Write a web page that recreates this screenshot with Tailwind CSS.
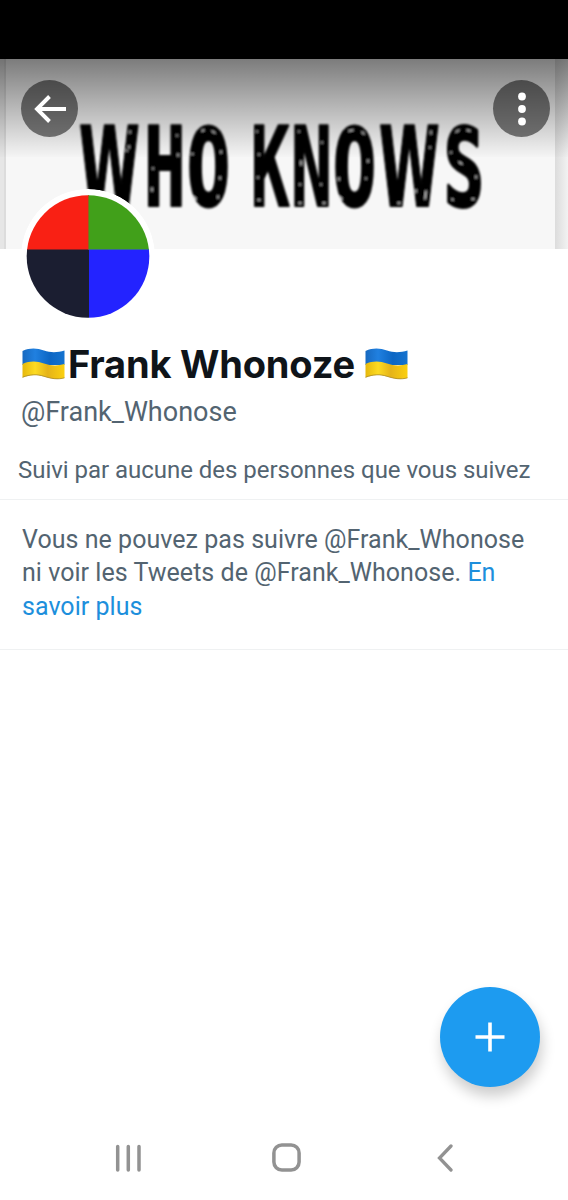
<!DOCTYPE html>
<html lang="fr">
  <head>
    <meta charset="UTF-8" />
    <meta name="viewport" content="width=device-width, initial-scale=1.0" />
    <title>Frank Whonoze</title>
    <script src="https://cdn.jsdelivr.net/npm/@tailwindcss/browser@4"></script>
    <style>
      body {
        font-family: 'Roboto', 'Liberation Sans', sans-serif;
      }
      h1 {
        font-family: 'Inter', 'Liberation Sans', sans-serif;
      }
    </style>
  </head>
  <body class="bg-white">
    <!-- Shared flag drawing -->
    <svg class="absolute size-0">
      <defs>
        <linearGradient id="flagBlue" x1="0" x2="1">
          <stop offset="0" stop-color="#1769c0" />
          <stop offset="0.3" stop-color="#2080e0" />
          <stop offset="0.65" stop-color="#0c66c4" />
          <stop offset="1" stop-color="#1573cf" />
        </linearGradient>
        <linearGradient id="flagYellow" x1="0" x2="1">
          <stop offset="0" stop-color="#e6b80c" />
          <stop offset="0.3" stop-color="#fddb22" />
          <stop offset="0.6" stop-color="#e5b318" />
          <stop offset="1" stop-color="#fbd00f" />
        </linearGradient>
        <symbol id="flag" viewBox="0 0 43 32">
          <path d="M.5 3C8-.5 15 0 22 2.500S36 4.500 42.500 2.500V17H.5Z" fill="url(#flagBlue)" />
          <path d="M.5 16C8 12.500 15 13 22 15.500S36 18 42.500 16V30C36 32 29 31 22 28.500S8 26.500.5 29.500Z" fill="url(#flagYellow)" />
          <path d="M.5 29.300C8 26.300 15 26 22 28.300S36 31.800 42.500 29.800" fill="none" stroke="#a98a2c" stroke-width=".8" />
        </symbol>
      </defs>
    </svg>

    <div class="flex h-[1200px] w-[568px] flex-col overflow-hidden bg-white">
      <div class="h-[59px] shrink-0 bg-black"></div>

      <!-- Banner -->
      <header class="relative h-[190px] shrink-0 bg-[#f7f7f7]">
        <svg class="absolute inset-0" width="568" height="190" viewBox="0 59 568 190">
          <defs>
            <linearGradient id="edge" x1="0" x2="1">
              <stop offset="0" stop-color="#dcdcdc" />
              <stop offset="1" stop-color="#f2f2f2" />
            </linearGradient>
            <filter id="soft"><feGaussianBlur stdDeviation="0.8" /></filter>
          </defs>
          <rect x="0" y="59" width="6" height="190" fill="#e6e6e6" />
          <rect x="4" y="59" width="2" height="190" fill="#dcdcdc" />
          <rect x="555" y="59" width="13" height="190" fill="url(#edge)" />
          <g filter="url(#soft)">
            <g font-family="DejaVu Sans Mono" font-weight="700" font-size="110" stroke="#000" stroke-width="2" stroke-linejoin="round">
              <text transform="translate(79 206) scale(.5 1)" font-family="DejaVu Sans">W</text>
              <text transform="translate(144 206) scale(.63 1)">H</text>
              <text transform="translate(187 205) scale(.65 .97)" stroke-width="3">O</text>
              <text transform="translate(251 206) scale(.58 1)">K</text>
              <text transform="translate(291 206) scale(.62 1)">N</text>
              <text transform="translate(333 205) scale(.65 .97)" stroke-width="3">O</text>
              <text transform="translate(379 206) scale(.5 1)" font-family="DejaVu Sans">W</text>
              <text transform="translate(444 205) scale(.6 .97)" stroke-width="4">S</text>
            </g>
            <!-- Worn ink specks -->
            <g fill="none" stroke="#d8d8d8" stroke-width="1.400" stroke-linecap="round">
              <path d="M130 131v2M129 146v2M127 150v1M152 188v3M153 168v1M177 135v1M178 154v2M202 131l2-1M212 131l3 2M192 154h1M221 151v2M220 177v2M194 197l2 2M218 196v2M257 131v1M259 154v1M258 177v1M258 200h2M299 131v1M301 161v4M300 184v1M321 184v1M299 203h2M323 203h2M322 142v1M349 131l4-1M362 132l2 2M339 178v2M340 197l2 2M368 160v2M366 178v1M431 131v3M430 147v1M416 190v2M426 191l-1 8M398 203h2M456 132l3-2M467 130l3 1M459 162l3 2M451 152v1M476 176v2M452 199l1 1M472 199h2" />
            </g>
          </g>
        </svg>
        <div class="absolute inset-x-0 top-0 h-[98px] bg-linear-to-b from-black/50 to-black/1"></div>
        <div class="relative flex justify-between pt-[21px] pr-[18px] pl-[21px]">
          <button class="flex size-[57px] items-center justify-center rounded-full bg-black/50">
            <svg width="32" height="28" viewBox="0 0 32 28" fill="none" stroke="#fff" stroke-width="3.900">
              <path d="M15.500 1.500 3 14l12.500 12.500M3 14h29" />
            </svg>
          </button>
          <button class="flex size-[57px] items-center justify-center rounded-full bg-black/50">
            <svg width="8" height="34" viewBox="0 0 8 34" fill="#fff">
              <circle cx="4" cy="4.500" r="3.900" />
              <circle cx="4" cy="17" r="3.900" />
              <circle cx="4" cy="29.500" r="3.900" />
            </svg>
          </button>
        </div>
        <!-- Avatar overlaps the banner's bottom edge -->
        <svg class="absolute top-[130px] left-[21px] rounded-full" width="134" height="134" viewBox="0 0 134 134">
          <defs>
            <clipPath id="round"><circle cx="67" cy="67.500" r="61.300" /></clipPath>
          </defs>
          <circle cx="67" cy="67" r="67" fill="#fff" />
          <g clip-path="url(#round)">
            <rect width="68" height="61" fill="#f92014" />
            <rect x="68" width="67" height="61" fill="#41a01a" />
            <rect y="61" width="68" height="73" fill="#1b1e31" />
            <rect x="68" y="61" width="67" height="73" fill="#2323ff" />
            <path d="M67.500 0v61" stroke="#8f641a" />
            <path d="M0 60.500h67.500" stroke="#8a2024" />
            <path d="M67.500 60.500H134" stroke="#34669a" />
          </g>
        </svg>
      </header>

      <main class="flex-1">
        <section class="h-[251px] border-b border-[#eff1f2] pt-[91px]">
          <h1 class="flex h-12 items-center pl-[22px] text-[38px] font-bold tracking-[-0.2px] whitespace-nowrap text-[#0f1419]">
            <svg class="mr-[3px] h-8 w-[43px]"><use href="#flag" /></svg>
            <span>Frank Whonoze</span>
            <svg class="ml-[10px] h-8 w-[43px]"><use href="#flag" /></svg>
          </h1>
          <p class="mt-[6px] pl-[21px] text-[27px] leading-[36px] whitespace-nowrap text-[#536471]">@Frank_Whonose</p>
          <p class="mt-[23px] pl-[18px] text-[24px] leading-[34px] tracking-[-0.03px] whitespace-nowrap text-[#536471]">Suivi par aucune des personnes que vous suivez</p>
        </section>

        <section class="h-[150px] border-b border-[#eff1f2] pt-[23px] pl-[22px] text-[25px] leading-[33.300px] tracking-[0.04px] whitespace-nowrap text-[#536471]">
          <p>Vous ne pouvez pas suivre @Frank_Whonose</p>
          <p>ni voir les Tweets de @Frank_Whonose. <a class="text-[#1d8fdc]">En</a></p>
          <p><a class="text-[#1d8fdc]">savoir plus</a></p>
        </section>
      </main>

      <button class="mr-[28px] flex size-[100px] shrink-0 items-center justify-center self-end rounded-full bg-[#1d9bf0] shadow-[2px_9px_14px_rgba(0,0,0,0.2)]">
        <svg width="30" height="30" viewBox="0 0 30 30" stroke="#fff" stroke-width="3.600">
          <path d="M15 .5v29M.5 15h29" />
        </svg>
      </button>

      <!-- Android navigation -->
      <nav class="mt-7 flex h-[85px] shrink-0 items-center pl-[115px]">
        <svg width="27" height="28" viewBox="0 0 27 28" stroke="#929292" stroke-width="3.500" stroke-linecap="round">
          <path d="M2.700 2.500v23.500M13.300 2.500v23.500M24 2.500v23.500" />
        </svg>
        <svg class="ml-[130px]" width="29" height="29" viewBox="0 0 29 29" fill="none" stroke="#929292" stroke-width="3.500">
          <rect x="1.900" y="1.900" width="25.200" height="25.200" rx="8" />
        </svg>
        <svg class="ml-[136px]" width="17" height="28" viewBox="0 0 17 28" fill="none" stroke="#929292" stroke-width="3.300" stroke-linecap="round">
          <path d="M14 2 2.500 14 14 26" />
        </svg>
      </nav>
    </div>
  </body>
</html>
